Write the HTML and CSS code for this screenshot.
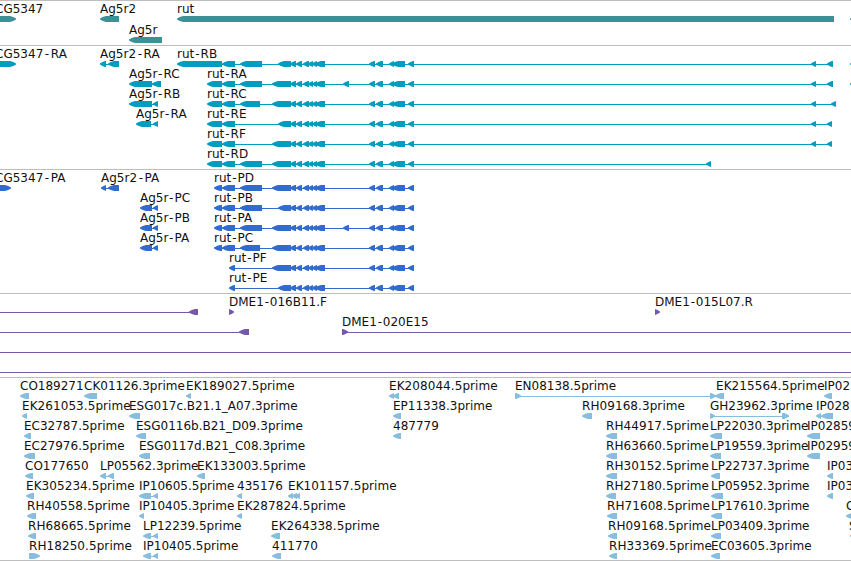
FILE: index.html
```
<!DOCTYPE html>
<html lang="en">
<head>
  <meta charset="UTF-8">
  <meta name="viewport" content="width=device-width, initial-scale=1.0">
  <title>Genome browser - rut</title>
  <link rel="stylesheet" href="styles.css">
</head>
<body>
  <main class="browser">
    <svg class="track genes" id="genes"></svg>
    <svg class="track transcripts" id="transcripts"></svg>
    <svg class="track proteins" id="proteins"></svg>
    <svg class="track clones" id="clones"></svg>
    <svg class="track ests" id="ests"></svg>
  </main>
  <script src="tracks.js"></script>
</body>
</html>
```
FILE: styles.css
```
* {
  margin: 0;
  padding: 0;
  box-sizing: border-box;
}

body {
  background-color: #fff;
  overflow: hidden;
}

.browser {
  display: flex;
  flex-direction: column;
  width: 851px;
  height: 561px;
  border-bottom: 1px solid #bebebe;
}

.track {
  display: block;
  flex: none;
  width: 100%;
  border-top: 1px solid #bebebe;
  overflow: hidden;
}

.track text {
  font-family: "DejaVu Sans", Verdana, sans-serif;
  font-size: 12px;
  fill: #111;
  white-space: pre;
}

.genes {
  height: 45px;
  color: #3f8f96;
}

.transcripts {
  height: 124px;
  color: #009dbf;
}

.proteins {
  height: 124px;
  color: #316bcd;
}

.clones {
  height: 84px;
  color: #7658a7;
}

.ests {
  height: 183px;
  color: #88bdde;
}

.block,
.intron {
  fill: currentColor;
}

.intron {
  shape-rendering: crispEdges;
}
```
FILE: tracks.js
```
const SVG_NS = 'http://www.w3.org/2000/svg';

// exons shared by all the rut models
const MID = [[290, 296], [296, 302], [303, 309], [308, 313], [312, 317], [315, 325]];
const TAIL = [[369, 375], [376, 383], [389, 394], [392, 405]];
const LAST = [[408, 414]];
const COMMON = [...MID, ...TAIL, ...LAST];
const EXTRA = [[343, 349]];
const UTR = [[207, 222], [222, 235]];
const CDS = [[214, 222], [222, 235]];
const RIGHT = [[811, 816]];

// feature: [row, x, label, blocks, strand]
const tracks = {
  genes: {
    pitch: 21,
    features: [
      [0, -5, 'CG5347', [[-20, 16]], 1],
      [0, 100, 'Ag5r2', [[100, 119]]],
      [1, 129, 'Ag5r', [[129, 162]]],
      [0, 177, 'rut', [[177, 834]]],
      [0, 850, '', [[850, 870]]]
    ]
  },
  transcripts: {
    pitch: 20,
    features: [
      [0, -5, 'CG5347-RA', [[-20, 16]], 1],
      [0, 100, 'Ag5r2-RA', [[100, 106], [108, 119]]],
      [1, 129, 'Ag5r-RC', [[129, 152], [152, 161]]],
      [2, 129, 'Ag5r-RB', [[129, 152], [153, 158]]],
      [3, 136, 'Ag5r-RA', [[136, 151], [153, 158]]],
      [0, 177, 'rut-RB', [[177, 222], [222, 235], [240, 262], [278, 291], ...COMMON, ...RIGHT, [827, 833]]],
      [1, 207, 'rut-RA', [...UTR, [240, 262], [272, 291], ...COMMON, ...EXTRA, ...RIGHT, [827, 833]]],
      [2, 207, 'rut-RC', [...UTR, [240, 260], [272, 291], ...COMMON, ...RIGHT, [831, 836]]],
      [3, 207, 'rut-RE', [...UTR, [278, 291], ...COMMON, ...RIGHT, [827, 832]]],
      [4, 207, 'rut-RF', [...UTR, [272, 291], ...COMMON, ...RIGHT, [827, 832]]],
      [5, 207, 'rut-RD', [...UTR, [240, 262], [272, 291], ...COMMON, [706, 711]]],
      [0, 850, '', [[850, 870]]],
      [1, 850, '', [[850, 870]]]
    ]
  },
  proteins: {
    pitch: 20,
    features: [
      [0, -5, 'CG5347-PA', [[-20, 11]], 1],
      [0, 101, 'Ag5r2-PA', [[101, 106], [108, 119]]],
      [1, 140, 'Ag5r-PC', [[140, 152], [153, 158]]],
      [2, 140, 'Ag5r-PB', [[140, 152], [153, 158]]],
      [3, 140, 'Ag5r-PA', [[140, 152], [153, 158]]],
      [0, 214, 'rut-PD', [...CDS, [240, 262], [272, 291], ...COMMON]],
      [1, 214, 'rut-PB', [...CDS, [240, 262], [278, 291], ...COMMON]],
      [2, 214, 'rut-PA', [...CDS, [240, 262], [272, 291], ...COMMON, ...EXTRA]],
      [3, 214, 'rut-PC', [...CDS, [240, 260], [272, 291], ...COMMON]],
      [4, 229, 'rut-PF', [[229, 235], [272, 291], ...COMMON]],
      [5, 229, 'rut-PE', [[229, 235], [278, 291], ...COMMON]]
    ]
  },
  clones: {
    pitch: 20,
    features: [
      [0, -20, '', [[-20, -10], [189, 198]]],
      [0, 229, 'DME1-016B11.F', [[229, 234]], 1],
      [0, 655, 'DME1-015L07.R', [[655, 660]], 1],
      [1, -20, '', [[-20, -10], [239, 249]]],
      [1, 342, 'DME1-020E15', [[342, 348], [870, 880]], 1],
      [2, -20, '', [[-20, -10], [870, 880]]],
      [3, -20, '', [[-20, -10], [870, 880]]]
    ]
  },
  ests: {
    pitch: 20,
    features: [
      [0, 20, 'CO189271', [[20, 29]]],
      [0, 84, 'CK01126.3prime', [[84, 97]]],
      [0, 186, 'EK189027.5prime', [[186, 191]]],
      [0, 389, 'EK208044.5prime', [[389, 394], [393, 399]]],
      [0, 515, 'EN08138.5prime', [[515, 521], [710, 716]], 1],
      [0, 716, 'EK215564.5prime', [[715, 724]]],
      [0, 824, 'IP02', [[824, 832]]],
      [1, 22, 'EK261053.5prime', [[22, 27]]],
      [1, 129, 'ESG017c.B21.1_A07.3prime', [[129, 140]]],
      [1, 393, 'EP11338.3prime', [[393, 401]]],
      [1, 582, 'RH09168.3prime', [[582, 592]]],
      [1, 710, 'GH23962.3prime', [[710, 715], [782, 789]], 1],
      [1, 816, 'IP028', [[816, 821], [821, 833]]],
      [2, 24, 'EC32787.5prime', [[24, 31]]],
      [2, 136, 'ESG0116b.B21_D09.3prime', [[136, 146]]],
      [2, 393, '487779', [[393, 401]]],
      [2, 606, 'RH44917.5prime', [[606, 617]]],
      [2, 710, 'LP22030.3prime', [[710, 722]]],
      [2, 807, 'IP02859', [[807, 820]]],
      [3, 24, 'EC27976.5prime', [[24, 35]]],
      [3, 139, 'ESG0117d.B21_C08.3prime', [[139, 150]]],
      [3, 606, 'RH63660.5prime', [[606, 617]]],
      [3, 710, 'LP19559.3prime', [[710, 721]]],
      [3, 807, 'IP02959', [[807, 820]]],
      [4, 25, 'CO177650', [[25, 33]]],
      [4, 100, 'LP05562.3prime', [[100, 106], [108, 114]]],
      [4, 197, 'EK133003.5prime', [[197, 205]]],
      [4, 606, 'RH30152.5prime', [[606, 617]]],
      [4, 711, 'LP22737.3prime', [[711, 720]]],
      [4, 827, 'IP03', [[827, 833]]],
      [5, 26, 'EK305234.5prime', [[26, 34]]],
      [5, 139, 'IP10605.5prime', [[139, 151], [153, 158]]],
      [5, 237, '435176', [[237, 242]]],
      [5, 288, 'EK101157.5prime', [[288, 293], [292, 297], [295, 300]]],
      [5, 606, 'RH27180.5prime', [[606, 616]]],
      [5, 711, 'LP05952.3prime', [[711, 723]]],
      [5, 827, 'IP03', [[827, 833]]],
      [6, 27, 'RH40558.5prime', [[27, 36]]],
      [6, 139, 'IP10405.3prime', [[139, 144]]],
      [6, 237, 'EK287824.5prime', [[237, 242]]],
      [6, 607, 'RH71608.5prime', [[607, 617]]],
      [6, 711, 'LP17610.3prime', [[711, 722]]],
      [6, 846, 'C', [[846, 856]]],
      [7, 28, 'RH68665.5prime', [[28, 36]]],
      [7, 143, 'LP12239.5prime', [[143, 151], [153, 158]]],
      [7, 271, 'EK264338.5prime', [[271, 280]]],
      [7, 608, 'RH09168.5prime', [[608, 617]]],
      [7, 711, 'LP03409.3prime', [[711, 721]]],
      [7, 849, 'S', [[850, 860]]],
      [8, 29, 'RH18250.5prime', [[29, 40]], 1],
      [8, 143, 'IP10405.5prime', [[143, 151], [153, 158]]],
      [8, 272, '411770', [[272, 281]]],
      [8, 609, 'RH33369.5prime', [[609, 617]]],
      [8, 711, 'EC03605.3prime', [[711, 720]]]
    ]
  }
};

function add(parent, name, attrs) {
  const el = document.createElementNS(SVG_NS, name);
  for (const key in attrs) {
    el.setAttribute(key, attrs[key]);
  }
  parent.appendChild(el);
  return el;
}

// block with a pointed end on the side of its strand
function arrow(x1, x2, y, strand) {
  const head = Math.min(x2 - x1 > 7 ? 6 : 5, x2 - x1);
  const tip = strand > 0 ? x2 : x1;
  const neck = strand > 0 ? x2 - head : x1 + head;
  const end = strand > 0 ? x1 : x2;
  const bend = tip - strand * 2.5;
  return `M${tip} ${y + 2.5}Q${bend} ${y + 0.8} ${neck} ${y}H${end}V${y + 6}H${neck}Q${bend} ${y + 5} ${tip} ${y + 3.5}Z`;
}

function hyphenSpace(label) {
  if (label.startsWith('DME')) return 0.8;
  if (label.startsWith('rut')) return 1;
  return label.startsWith('Ag5r-') ? 1.3 : 1.6;
}

function drawLabel(svg, x, y, label) {
  const text = add(svg, 'text', { x: x, y: y });
  text.textContent = label;
  const hyphen = label.indexOf('-');
  if (hyphen > 0) {
    const dx = Array(label.length).fill(0);
    dx[hyphen] = hyphenSpace(label);
    dx[hyphen + 1] = hyphenSpace(label);
    text.setAttribute('dx', dx.join(' '));
  } else if (/^(EK|RH)/.test(label)) {
    text.setAttribute('textLength', text.getComputedTextLength() + 1);
  }
}

function drawTrack(id, track) {
  const svg = document.getElementById(id);
  track.features.forEach(([row, x, label, blocks, strand = -1]) => {
    const top = row * track.pitch;
    const from = Math.min(...blocks.map(b => b[0]));
    const to = Math.max(...blocks.map(b => b[1]));
    if (blocks.length > 1) {
      add(svg, 'rect', { class: 'intron', x: from + 1, y: top + 18, width: to - from - 1, height: 1 });
    }
    blocks.forEach(([x1, x2]) => {
      add(svg, 'path', { class: 'block', d: arrow(x1, x2, top + 15, strand) });
    });
    if (label) {
      drawLabel(svg, x, top + 12, label);
    }
  });
}

Object.keys(tracks).forEach(id => drawTrack(id, tracks[id]));
```
